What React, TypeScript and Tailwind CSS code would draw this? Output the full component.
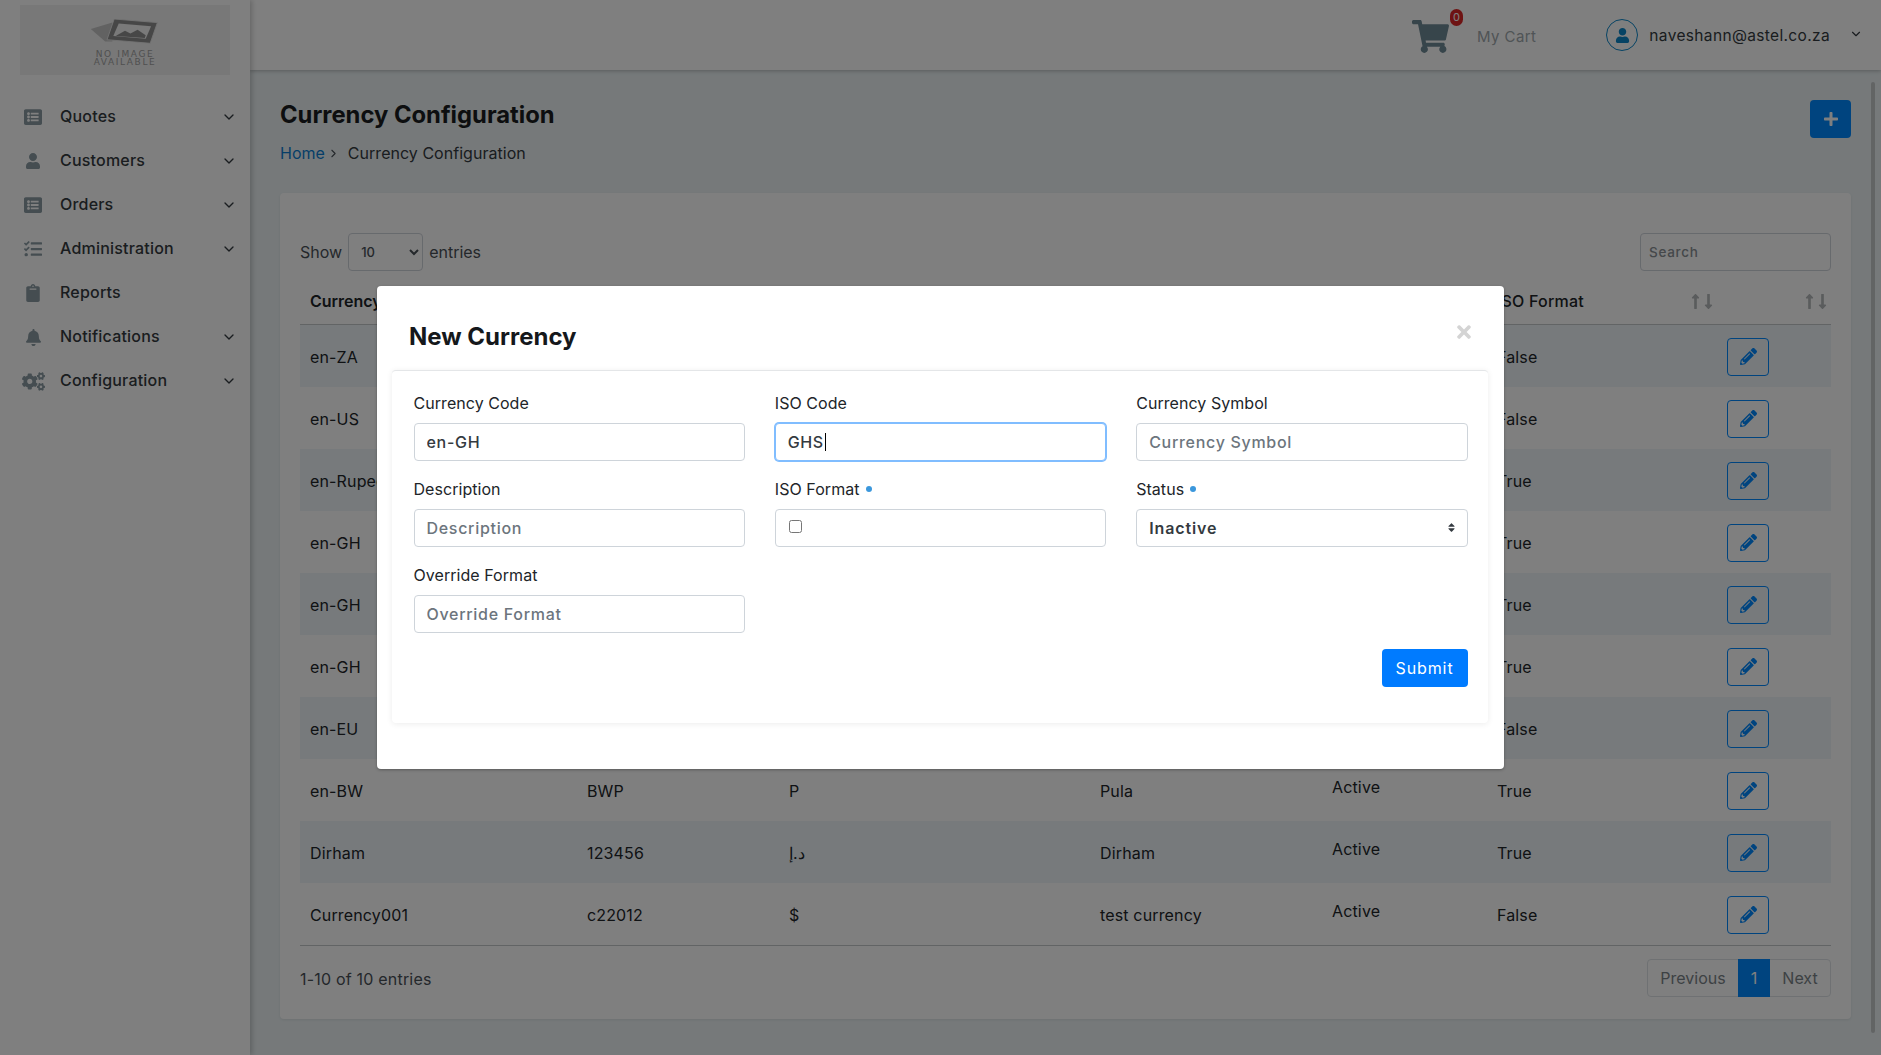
import React from "react";
import { FaListAlt, FaUser, FaTasks, FaClipboard, FaBell, FaCogs, FaPencilAlt, FaShoppingCart, FaPlus, FaTimes, FaLongArrowAltUp, FaLongArrowAltDown, FaSort } from "react-icons/fa";
import { ChevronDown, ChevronRight } from "lucide-react";

const menu = [
  { icon: <FaListAlt size={18} />, label: "Quotes", arrow: true },
  { icon: <FaUser size={16} />, label: "Customers", arrow: true },
  { icon: <FaListAlt size={18} />, label: "Orders", arrow: true },
  { icon: <FaTasks size={18} />, label: "Administration", arrow: true },
  { icon: <FaClipboard size={18} />, label: "Reports", arrow: false },
  { icon: <FaBell size={17} />, label: "Notifications", arrow: true },
  { icon: <FaCogs size={23} />, label: "Configuration", arrow: true },
];

const rows = [
  ["en-ZA", "ZAR", "R", "Rand", "Active", "False"],
  ["en-US", "USD", "$", "US Dollar", "Active", "False"],
  ["en-Rupee", "INR", "₹", "Rupee", "Active", "True"],
  ["en-GH", "GHS", "₵", "Cedi", "Active", "True"],
  ["en-GH", "GHS", "₵", "Cedi", "Active", "True"],
  ["en-GH", "GHS", "₵", "Cedi", "Active", "True"],
  ["en-EU", "EUR", "€", "Euro", "Active", "False"],
  ["en-BW", "BWP", "P", "Pula", "Active", "True"],
  ["Dirham", "123456", "د.إ", "Dirham", "Active", "True"],
  ["Currency001", "c22012", "$", "test currency", "Active", "False"],
];

const colClass = "grid grid-cols-[277px_202px_311px_232px_165px_230px_114px]";

function Sort() {
  return (
    <span className="flex text-[#b4b8ba] -space-x-[4px]">
      <FaLongArrowAltUp size={17} />
      <FaLongArrowAltDown size={17} />
    </span>
  );
}

function Field({ label, dot, children }: { label: string; dot?: boolean; children: React.ReactNode }) {
  return (
    <div className="flex flex-col mb-4">
      <div className="h-6 mb-2 pb-[1px] flex items-center gap-[6px] text-[16px] tracking-[0.05px] text-[#212529]">
        {label}
        {dot && <span className="w-[6px] h-[6px] rounded-full bg-[#3b97dc]" />}
      </div>
      {children}
    </div>
  );
}

const inputClass =
  "h-[38px] w-full rounded border border-[#ced4da] bg-white px-3 text-[16px] font-medium tracking-[0.7px] text-[#343a40] placeholder:text-[#6c757d] outline-none";

export default function App() {
  return (
    <div className="relative flex h-screen w-full overflow-hidden bg-[#ecf3f5] font-['Inter','Liberation_Sans',sans-serif] text-[#212529]">
      <aside className="w-[250px] shrink-0 bg-white shadow-[2px_0_5px_rgba(0,0,0,0.2)] z-10 flex flex-col items-center">
        <div className="mt-[5px] h-[70px] w-[210px] bg-[#f0f0f0] flex flex-col items-center pt-[14px] text-[#a0a0a0]">
          <svg width="76" height="27" viewBox="0 0 76 30">
            <path d="M0 11 L24 4 L24 25 L16 25 Z" fill="#c4c4c4" />
            <path d="M26 0 L74 4 L66 27 L18 23 Z" fill="#8f8f8f" stroke="#e8e8e8" strokeWidth="1" />
            <path d="M31 5 L67 8 L61 22 L25 19 Z" fill="#f4f4f4" />
            <path d="M29 18 L38 13 L44 16 L52 12 L61 18 L60 21 L28 19 Z" fill="#8f8f8f" />
          </svg>
          <div className="text-[9px] leading-[8px] font-['DejaVu_Sans',sans-serif] tracking-[1.6px] text-center mt-[4px]">
            NO IMAGE
            <br />
            AVAILABLE
          </div>
        </div>
        <nav className="mt-[20px] w-full">
          {menu.map((m) => (
            <div key={m.label} className="h-[44px] flex items-center pl-[20px] pr-[13px] text-[#343a40]">
              <span className="w-[26px] flex justify-center text-[#8a9ba3]">{m.icon}</span>
              <span className="ml-[14px] pb-[2px] flex-1 text-[16px] font-medium tracking-[0.2px]">{m.label}</span>
              {m.arrow && <ChevronDown size={16} strokeWidth={2} className="text-[#343a40]" />}
            </div>
          ))}
        </nav>
      </aside>

      <main className="flex-1 flex flex-col min-w-0">
        <header className="h-[70px] shrink-0 bg-white shadow-[0_1px_4px_rgba(0,0,0,0.25)] flex items-center justify-end text-[15px]">
          <div className="relative mr-[28px] mt-[3px]">
            <FaShoppingCart size={37} className="text-[#6f8a96]" />
            <span className="absolute -right-[14px] -top-[9px] h-[17px] w-[13px] rounded-full bg-[#dc2626] text-white text-[11px] flex items-center justify-center">0</span>
          </div>
          <span className="mr-[70px] mt-[4px] text-[#a0a8ac] tracking-[0.4px]">My Cart</span>
          <span className="w-[32px] h-[32px] rounded-full border border-[#0d87c9] flex items-center justify-center text-[#0d87c9]">
            <FaUser size={15} />
          </span>
          <span className="ml-[11px] mt-[1px] text-[15.5px] tracking-[0.35px] text-[#343a40]">naveshann@astel.co.za</span>
          <ChevronDown size={14} className="ml-[19px] mr-[18px] mb-[2px] text-[#343a40]" />
        </header>

        <div className="flex-1 px-[30px] min-h-0">
          <div className="flex justify-between items-start pt-[31px] h-[123px]">
            <div>
              <h1 className="text-[23.8px] leading-[28px] font-bold text-[#1a1d20]">Currency Configuration</h1>
              <div className="mt-[12px] flex items-center text-[16px] leading-[24px]">
                <span className="text-[#0b7dd1]">Home</span>
                <ChevronRight size={13} className="mx-[2px] text-[#495057]" />
                <span className="ml-[6px] tracking-[0.03px] text-[#343a40]">Currency Configuration</span>
              </div>
            </div>
            <button className="-mt-[1px] w-[41px] h-[38px] rounded bg-[#0088ff] text-white flex items-center justify-center">
              <FaPlus size={16} />
            </button>
          </div>

          <section className="h-[826px] rounded bg-white shadow-[0_1px_3px_rgba(0,0,0,0.08)] px-[20px] pt-[40px]">
            <div className="flex items-center justify-between h-[38px] text-[16px] text-[#495057]">
              <div className="flex items-center">
                Show
                <select defaultValue="10" className="ml-[6px] mr-[6px] h-[38px] w-[75px] rounded border border-[#ced4da] bg-white pl-[8px] text-[13px] font-medium">
                  <option>10</option>
                </select>
                entries
              </div>
              <input placeholder="Search" className="h-[38px] w-[191px] rounded border border-[#ced4da] bg-white px-[8px] text-[13.5px] font-medium tracking-[0.7px] placeholder:text-[#8a9095] outline-none" />
            </div>

            <div className={`${colClass} mt-[16px] h-[38px] items-center border-b border-[#c4c8ca] text-[16px] font-medium pb-[9px]`}>
              <div className="pl-[10px] font-semibold">Currency Code</div>
              <div className="pl-[10px]">ISO Code</div>
              <div className="pl-[10px]">Currency Symbol</div>
              <div className="pl-[10px]">Description</div>
              <div className="pl-[10px]">Status</div>
              <div className="pl-[10px] flex justify-between items-center"><span className="tracking-[0.2px]">ISO Format</span><Sort /></div>
              <div className="flex justify-end"><Sort /></div>
            </div>

            {rows.map((r, i) => (
              <div key={i} className={`${colClass} h-[62px] items-center text-[16px] tracking-[0.15px] ${i % 2 === 0 ? "bg-[#eef5f9]" : ""}`}>
                <div className="pl-[10px] pt-[1px]">{r[0]}</div>
                <div className="pl-[10px] pt-[1px]">{r[1]}</div>
                <div className="pl-[10px] pt-[1px]">{r[2]}</div>
                <div className="pl-[10px] pt-[1px]">{r[3]}</div>
                <div className="pl-[10px] pb-[7px]">{r[4]}</div>
                <div className="pl-[10px] pt-[1px]">{r[5]}</div>
                <div className="pl-[10px] pt-[1px]">
                  <button className="w-[42px] h-[38px] rounded border border-[#0088ff] flex items-center justify-center text-[#0088ff]">
                    <FaPencilAlt size={17} />
                  </button>
                </div>
              </div>
            ))}

            <div className="border-t border-[#c4c8ca] mt-0 flex items-center justify-between h-[64px] text-[16px] text-[#495057]">
              <span className="pt-[2px] tracking-[0.2px]">1-10 of 10 entries</span>
              <div className="flex h-[38px] rounded border border-[#dee2e6] text-[#7b8388]">
                <span className="w-[90px] flex items-center justify-center">Previous</span>
                <span className="w-[32px] -my-px flex items-center justify-center bg-[#0088ff] text-white">1</span>
                <span className="w-[60px] flex items-center justify-center">Next</span>
              </div>
            </div>
          </section>
        </div>
      </main>

      <div className="absolute right-[6px] top-[82px] h-[951px] w-[4px] rounded bg-[#c4c8c9] z-20" />

      <div className="absolute inset-0 z-30 bg-black/50 flex justify-center items-start pt-[286px]">
        <div className="w-[1127px] h-[483px] rounded bg-white pl-[15px] pr-[16px] flex flex-col shadow-[0_1px_3px_rgba(0,0,0,0.3)]">
          <div className="relative h-[84px] shrink-0 pl-[17px] flex items-center pt-[17px]">
            <h2 className="text-[24px] font-bold text-[#15181b]">New Currency</h2>
            <FaTimes size={20} className="absolute right-[14px] top-[36px] text-[#d4d4d4]" />
          </div>
          <div className="h-[353px] rounded bg-white border-t border-[#e4e6e8] shadow-[0_1px_6px_rgba(0,0,0,0.08)] pl-[21.5px] pr-[20.5px] pt-[20px]">
            <div className="grid grid-cols-3 gap-x-[30px]">
              <Field label="Currency Code">
                <input className={inputClass} defaultValue="en-GH" />
              </Field>
              <Field label="ISO Code">
                <div className="h-[38px] w-full rounded border border-[#80bdff] ring-1 ring-[#80bdff] bg-white px-3 text-[16px] font-medium tracking-[0.5px] text-[#343a40] flex items-center">
                  GHS
                  <span className="ml-[1px] w-px h-[18px] bg-black" />
                </div>
              </Field>
              <Field label="Currency Symbol">
                <input className={inputClass} placeholder="Currency Symbol" />
              </Field>
              <Field label="Description">
                <input className={inputClass} placeholder="Description" />
              </Field>
              <Field label="ISO Format" dot>
                <div className="h-[38px] w-full rounded border border-[#ced4da] bg-white pl-[13px] pt-[10px] flex items-start">
                  <input type="checkbox" className="w-[13px] h-[13px]" />
                </div>
              </Field>
              <Field label="Status" dot>
                <div className="relative">
                  <select defaultValue="Inactive" className={`${inputClass} appearance-none font-semibold tracking-[0.9px]`}>
                    <option>Active</option>
                    <option>Inactive</option>
                  </select>
                  <FaSort size={11} className="absolute right-[11px] top-[13px] text-[#343a40]" />
                </div>
              </Field>
              <Field label="Override Format">
                <input className={inputClass} placeholder="Override Format" />
              </Field>
            </div>
            <div className="flex justify-end">
              <button className="w-[86px] h-[38px] rounded bg-[#007bff] text-white text-[16px] tracking-[0.9px]">Submit</button>
            </div>
          </div>
        </div>
      </div>
    </div>
  );
}
